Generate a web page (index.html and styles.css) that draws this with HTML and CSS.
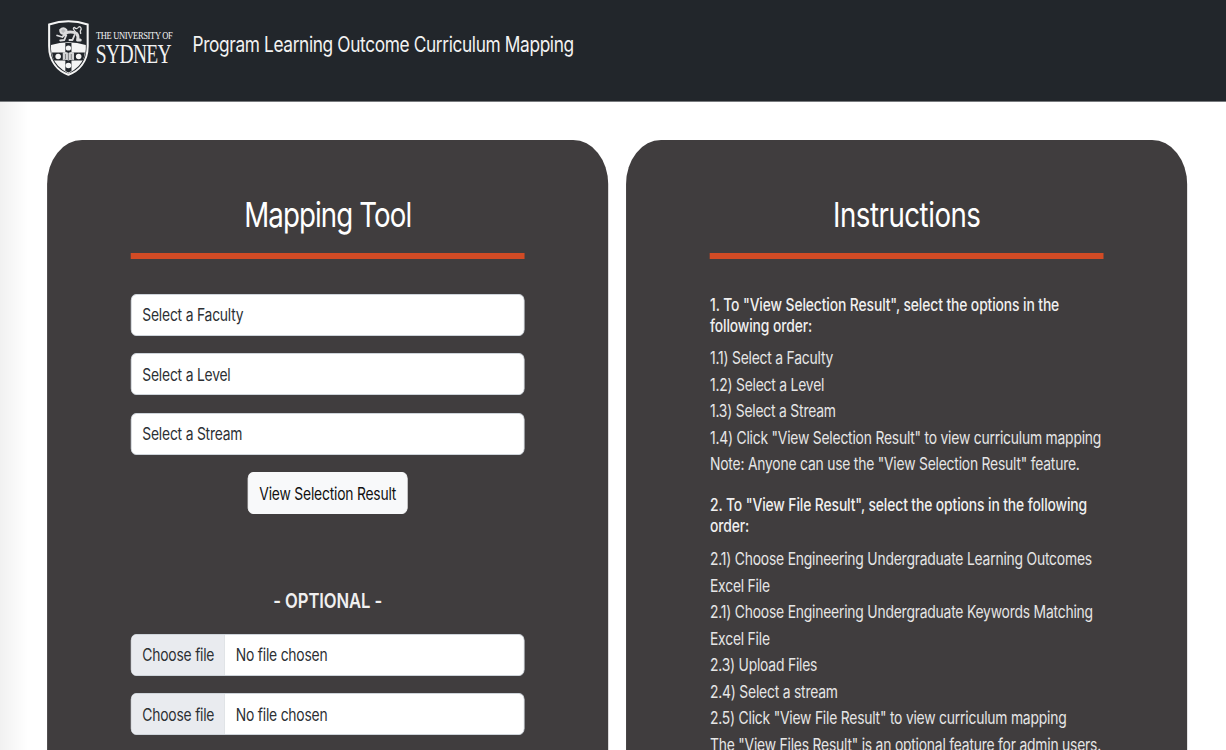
FILE: index.html
```html
<!DOCTYPE html>
<html lang="en">
<head>
<meta charset="utf-8">
<title>Program Learning Outcome Curriculum Mapping</title>
<link rel="stylesheet" href="styles.css">
</head>
<body>
<div class="viewport">
<div class="page">
  <header class="navbar">
    <svg class="crest" viewBox="0 0 40 56" preserveAspectRatio="none">
      <path d="M1.200 4.500Q20-2 38.800 4.500V26C38.800 42 30 51 20 54.800C10 51 1.200 42 1.200 26Z" fill="#22262b" stroke="#f4f4f4" stroke-width="2"/>
      <path d="M3 25Q20 19.500 37 25V29Q36.500 39 30 46Q25 51 20 53.500Q15 51 10 46Q3.500 39 3 29Z" fill="#f4f4f4"/>
      <path d="M17 23H23V32.500H36Q35.500 37 34 40.500H23V51L20 52.500L17 51V40.500H6Q4.500 37 4 32.500H17Z" fill="#22262b"/>
      <path d="M14.500 32.500Q17.500 31.500 20 33Q22.500 31.500 25.500 32.500V40Q22.500 39.300 20 40.500Q17.500 39.300 14.500 40Z" fill="#d4d5d6"/>
      <path d="M20 33V40M17.200 34V39M22.800 34V39" stroke="#6a6d70" stroke-width=".8"/>
      <g fill="#f4f4f4"><circle cx="20" cy="28" r="2.600"/><circle cx="20" cy="45.500" r="2.800"/><circle cx="10" cy="36.500" r="2.700"/><circle cx="30" cy="36.500" r="2.700"/></g>
      <g fill="none" stroke="#dcdcdd" stroke-linecap="round" stroke-linejoin="round">
        <path d="M12 10Q15 6.500 18 10Q19 13 15.500 14Q12 13.500 12 10Z" fill="#b8babc" stroke-width="2"/>
        <path d="M17 13Q23 11 28 13.500Q30 16 29 20H31.500" stroke-width="3"/>
        <path d="M17 14L14 17L9 15.500M18 15L16 20L12 20.500M26 15L24 20H21" stroke-width="1.800"/>
        <path d="M28 13Q23 8 26 7.500Q28 10 30 7Q32 6 32.500 9Q31 11 32 13.500" stroke-width="1.300"/>
      </g>
    </svg>
    <div class="wordmark"><span class="wordmark-top">THE UNIVERSITY OF</span><span class="wordmark-name">SYDNEY</span></div>
    <span class="brand">Program Learning Outcome Curriculum Mapping</span>
  </header>
  <main class="columns">
    <section class="card">
      <h2 class="card-title">Mapping Tool</h2>
      <div class="rule"></div>
      <div class="form">
        <div class="field">Select a Faculty</div>
        <div class="field">Select a Level</div>
        <div class="field">Select a Stream</div>
        <button class="button">View Selection Result</button>
        <h5 class="optional">- OPTIONAL -</h5>
        <div class="field file"><span class="choose">Choose file</span><span class="chosen">No file chosen</span></div>
        <div class="field file"><span class="choose">Choose file</span><span class="chosen">No file chosen</span></div>
      </div>
    </section>
    <section class="card">
      <h2 class="card-title loose">Instructions</h2>
      <div class="rule"></div>
      <div class="guide">
        <h6 class="step">1. To "View Selection Result", select the options in the<br>following order:</h6>
        <p class="items">1.1) Select a Faculty<br>1.2) Select a Level<br>1.3) Select a Stream<br>1.4) Click "View Selection Result" to view curriculum mapping<br>Note: Anyone can use the "View Selection Result" feature.</p>
        <h6 class="step">2. To "View File Result", select the options in the following<br>order:</h6>
        <p class="items">2.1) Choose Engineering Undergraduate Learning Outcomes<br>Excel File<br>2.1) Choose Engineering Undergraduate Keywords Matching<br>Excel File<br>2.3) Upload Files<br>2.4) Select a stream<br>2.5) Click "View File Result" to view curriculum mapping<br>The "View Files Result" is an optional feature for admin users.</p>
      </div>
    </section>
  </main>
</div>
</div>
</body>
</html>
```
FILE: styles.css
```css
* { box-sizing: border-box; }
html, body { margin: 0; height: 750px; overflow: hidden; background: #fff; }
.viewport { width: 1226px; height: 750px; overflow: hidden; }

/* The page is condensed horizontally by --sx; widths are divided by it. */
.page {
  --sx: .812;
  width: calc(1226px / var(--sx));
  height: 750px;
  overflow: hidden;
  transform: scaleX(var(--sx));
  transform-origin: 0 0;
  font-family: Inter, "Liberation Sans", sans-serif;
  font-size: 17.1px;
  letter-spacing: -.26px;
  color: #212529;
  white-space: nowrap;
  background: linear-gradient(90deg, #f1f1f1, #fff calc(28px / var(--sx)));
}
.navbar {
  display: flex;
  align-items: flex-start;
  height: 102px;
  padding: 20px 0 0 calc(48px / var(--sx));
  background: #22262b;
  border-bottom: 1px solid #777a7d;
  color: #f2f2f2;
}
.crest { width: calc(41px / var(--sx)); height: 56px; }
.wordmark {
  display: flex;
  flex-direction: column;
  width: calc(76px / var(--sx));
  margin: 10px calc(20.5px / var(--sx)) 0 calc(7px / var(--sx));
  font-family: "Liberation Serif", serif;
  letter-spacing: 0;
}
.wordmark-top { font-size: 10.5px; line-height: 12px; letter-spacing: -.45px; }
.wordmark-name {
  font-size: 27px;
  line-height: 24px;
  letter-spacing: -.9px;
  transform: scaleX(.89);
  transform-origin: 0 0;
}
.brand { font-size: 21.3px; line-height: 26px; margin-top: 11px; letter-spacing: -.45px; }

.columns {
  display: flex;
  gap: calc(17.5px / var(--sx));
  padding: 37.5px 0 0 calc(47px / var(--sx));
}
.card {
  width: calc(561.5px / var(--sx));
  height: 700px;
  padding: 53px calc(84px / var(--sx)) 0;
  background: #403d3e;
  border-radius: calc(35px / var(--sx)) calc(35px / var(--sx)) 0 0 / 44px 44px 0 0;
  color: #f0f0f0;
}
.card-title {
  margin: 0;
  height: 60px;
  font-size: 34.1px;
  font-weight: 400;
  line-height: 43px;
  text-align: center;
  letter-spacing: -1.1px;
  color: #fff;
}
.card-title.loose { letter-spacing: -.6px; }
.rule { height: 6px; background: #d14b25; }
.form { display: flex; flex-direction: column; align-items: center; padding-top: 35px; }
.field {
  display: flex;
  align-items: center;
  width: 100%;
  height: 42px;
  margin-bottom: 17.6px;
  padding-left: calc(10.5px / var(--sx));
  background: #fff;
  border: 1px solid #ced4da;
  border-radius: calc(5.5px / var(--sx)) / 6.5px;
  color: #2c3034;
  overflow: hidden;
}
.button {
  width: calc(159.5px / var(--sx));
  height: 42px;
  padding: 0;
  background: #f8f9fa;
  border: 1px solid #f8f9fa;
  border-radius: calc(5.5px / var(--sx)) / 6.5px;
  font: inherit;
  letter-spacing: inherit;
  color: #111;
}
.optional {
  margin: 73px 0 20px;
  height: 26.500px;
  line-height: 27px;
  font-size: 20.5px;
  font-weight: 600;
  letter-spacing: -.1px;
}
.file { padding-left: 0; }
.choose {
  display: flex;
  align-items: center;
  width: calc(93.5px / var(--sx));
  height: 100%;
  padding-left: calc(10.5px / var(--sx));
  background: #e9ebef;
  border-right: 1px solid #dfe2e6;
}
.chosen { padding-left: calc(10.5px / var(--sx)); }

.guide { padding-top: 35px; }
.step { margin: 0 0 9.8px; font-size: 17.1px; font-weight: 450; line-height: 21.1px; letter-spacing: -.14px; }
.items { margin: 0 0 16.6px; line-height: 26.45px; color: #e6e6e6; }
```
